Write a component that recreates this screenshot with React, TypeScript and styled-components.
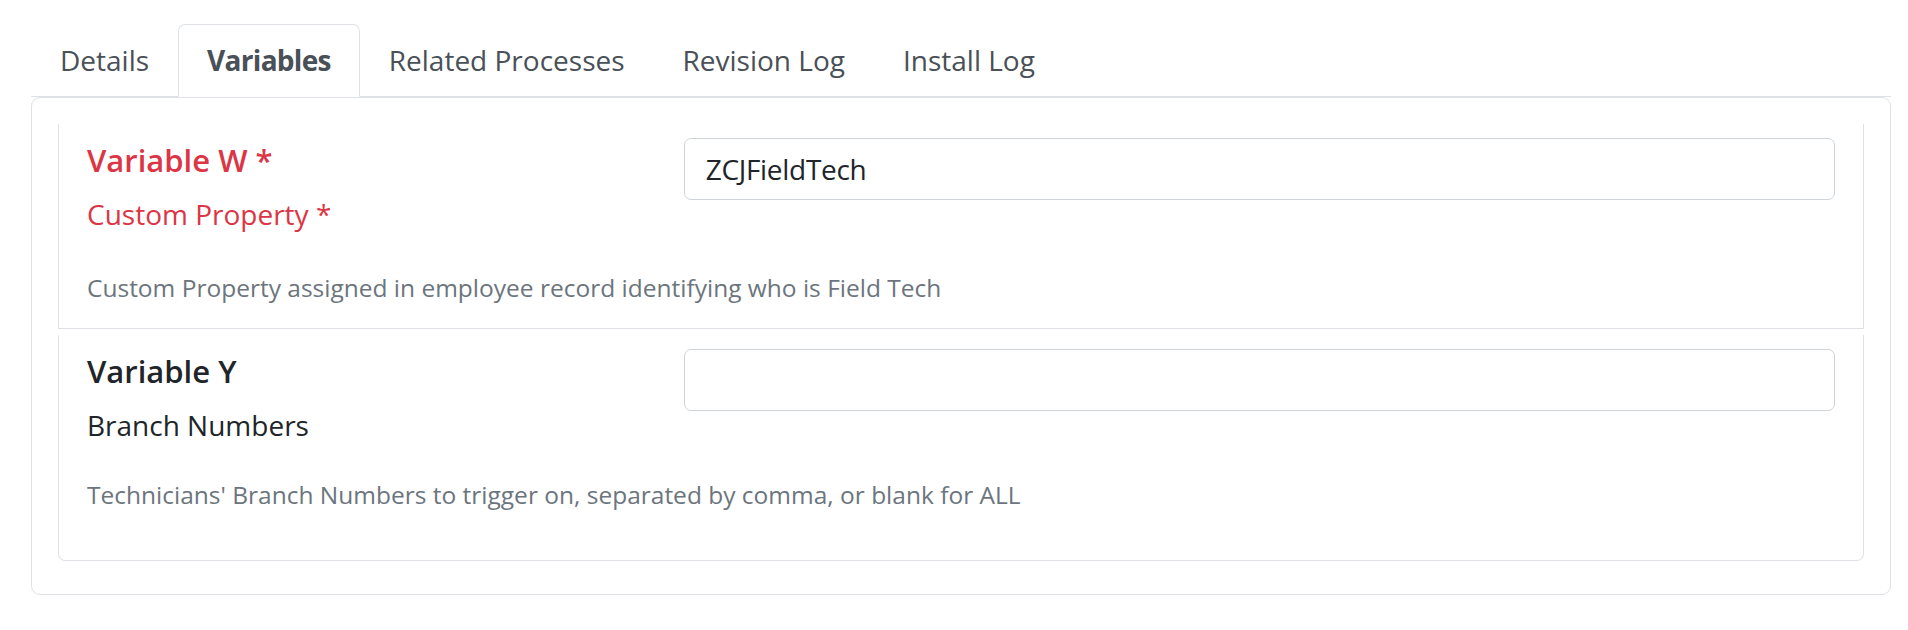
import React from "react";
import styled, { createGlobalStyle } from "styled-components";

const GlobalStyle = createGlobalStyle`
  html, body {
    margin: 0;
    padding: 0;
    background: #ffffff;
  }
  body {
    font-family: "Open Sans", "Noto Sans", sans-serif;
    color: #212529;
  }
  *, *::before, *::after {
    box-sizing: border-box;
  }
`;

const Page = styled.div`
  padding: 24px 17px 0 31px;
`;

const TabList = styled.ul`
  display: flex;
  list-style: none;
  margin: 0;
  padding: 0;
  border-bottom: 1px solid #dee2e6;
`;

const Tab = styled.li<{ $active?: boolean }>`
  margin-bottom: -1px;
  padding: 14px 28px 15px;
  font-size: 28px;
  line-height: 42px;
  white-space: nowrap;
  color: #495057;
  font-weight: ${(p) => (p.$active ? 700 : 400)};
  letter-spacing: ${(p) => (p.$active ? "-0.7px" : "0")};
  background: ${(p) => (p.$active ? "#ffffff" : "transparent")};
  border: 1px solid transparent;
  border-color: ${(p) => (p.$active ? "#dee2e6 #dee2e6 #ffffff" : "transparent")};
  border-radius: 7px 7px 0 0;
  cursor: pointer;
`;

const Panel = styled.div`
  border: 1px solid #dee2e6;
  border-radius: 9px;
  padding: 26px 26px 33px;
  display: flex;
  flex-direction: column;
  gap: 6px;
`;

const Card = styled.div<{ $last?: boolean }>`
  border: 1px solid #dee2e6;
  border-top: none;
  border-radius: ${(p) => (p.$last ? "0 0 7px 7px" : "0")};
  padding: 14px 28px ${(p) => (p.$last ? 47 : 22)}px;
`;

const FieldRow = styled.div`
  display: grid;
  grid-template-columns: calc((100% + 42px) / 3 - 42px) 1fr;
  column-gap: 42px;
  align-items: start;
`;

const LabelColumn = styled.div`
  display: flex;
  flex-direction: column;
  padding-top: 4px;
`;

const Title = styled.div<{ $required?: boolean }>`
  font-size: 31px;
  line-height: 37px;
  font-weight: 600;
  color: ${(p) => (p.$required ? "#dc3545" : "#212529")};
`;

const Subtitle = styled.div<{ $required?: boolean }>`
  margin-top: 14px;
  font-size: 28px;
  line-height: 42px;
  font-weight: 400;
  color: ${(p) => (p.$required ? "#dc3545" : "#212529")};
`;

const TextInput = styled.input`
  display: block;
  width: 100%;
  height: 62px;
  padding: 0 21px;
  font-family: "Open Sans", "Noto Sans", sans-serif;
  font-size: 28px;
  letter-spacing: -0.3px;
  color: #212529;
  background: #ffffff;
  border: 1px solid #ced4da;
  border-radius: 7px;
  outline: none;
`;

const Description = styled.div<{ $gap: number }>`
  margin-top: ${(p) => p.$gap}px;
  font-size: 24.5px;
  line-height: 37px;
  color: #6c757d;
`;

type Variable = {
  title: string;
  label: string;
  value: string;
  description: string;
  required: boolean;
  gap: number;
};

const variables: Variable[] = [
  {
    title: "Variable W",
    label: "Custom Property",
    value: "ZCJFieldTech",
    description: "Custom Property assigned in employee record identifying who is Field Tech",
    required: true,
    gap: 34,
  },
  {
    title: "Variable Y",
    label: "Branch Numbers",
    value: "",
    description: "Technicians' Branch Numbers to trigger on, separated by comma, or blank for ALL",
    required: false,
    gap: 30,
  },
];

const tabs = ["Details", "Variables", "Related Processes", "Revision Log", "Install Log"];

export default function App() {
  return (
    <>
      <GlobalStyle />
      <Page>
        <TabList>
          {tabs.map((t) => (
            <Tab key={t} $active={t === "Variables"}>
              {t}
            </Tab>
          ))}
        </TabList>
        <Panel>
          {variables.map((v, i) => (
            <Card key={v.title} $last={i === variables.length - 1}>
              <FieldRow>
                <LabelColumn>
                  <Title $required={v.required}>
                    {v.title}
                    {v.required ? " *" : ""}
                  </Title>
                  <Subtitle $required={v.required}>
                    {v.label}
                    {v.required ? " *" : ""}
                  </Subtitle>
                </LabelColumn>
                <TextInput readOnly value={v.value} />
              </FieldRow>
              <Description $gap={v.gap}>{v.description}</Description>
            </Card>
          ))}
        </Panel>
      </Page>
    </>
  );
}
